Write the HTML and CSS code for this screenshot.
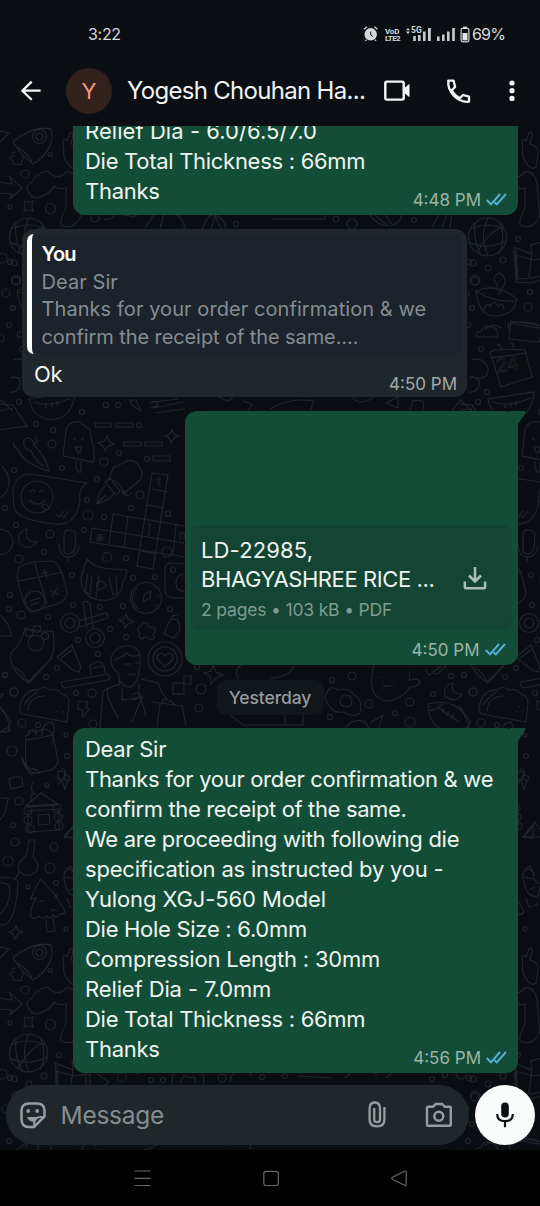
FILE: index.html
```html
<!DOCTYPE html>
<html lang="en">
<head>
<meta charset="utf-8">
<title>Chat</title>
<link rel="stylesheet" href="styles.css">
</head>
<body>
<div class="phone">
  <div class="status">
    <span class="clock">3:22</span>
    <div class="status-icons">
      <svg class="alarm" width="15" height="16" viewBox="364 27 15 16"><circle cx="371.7" cy="35.3" r="6.2" fill="#d5d7d8"/><path d="M365 30.2l3-2.4M378.4 30.2l-3-2.4M367.6 40.6l-1.3 1.3M375.8 40.6l1.3 1.3" stroke="#d5d7d8" stroke-width="1.3"/><path d="M371.7 32.5v3.300l2 1.600" stroke="#0b0f13" stroke-width="1" fill="none"/></svg>
      <div class="volte"><span>VoD</span><span>LTE2</span></div>
      <svg class="sig1" width="27" height="16" viewBox="406 26 27 16"><path d="M407 30.3l2-2.4 2 2.4zM407 31.6l2 2.4 2-2.4z" fill="#d5d7d8"/><text x="412" y="33.2" class="net">5G</text><path d="M414.2 36h2.6v5h-2.6zM419 35h2.6v6h-2.6zM424 31.5h2.6v9.500h-2.6zM429 28h2.800v13h-2.800z" fill="#c9cbcc"/></svg>
      <svg class="sig2" width="20" height="14" viewBox="437 28 20 14"><path d="M438 36.500h2.600v4.500h-2.600zM443 34.500h2.600v6.500h-2.600zM448 31.500h2.600v9.500h-2.600zM453.200 28h2.600v13h-2.600z" fill="#c9cbcc"/></svg>
      <svg class="batt" width="10" height="17" viewBox="460.500 26 10 17"><path d="M463.500 26.600h4v1.700h-4z" fill="#d5d7d8"/><rect x="461.600" y="28.400" width="7.800" height="13.400" rx="1.500" fill="none" stroke="#d5d7d8" stroke-width="1.200"/><path d="M463 33h5v7.400h-5z" fill="#e4e6e6"/></svg>
      <span class="pct">69%</span>
    </div>
  </div>

  <header class="bar">
    <svg class="back" width="24" height="24" viewBox="19 79 24 24"><path d="M40.600 90.700H22.300M31.700 81.600l-9.300 9.100 9.300 9.100" fill="none" stroke="#f4f6f7" stroke-width="2.300"/></svg>
    <div class="avatar">Y</div>
    <h1 class="name">Yogesh Chouhan Ha...</h1>
    <svg class="video" width="28" height="24" viewBox="383 79 28 24"><rect x="385.300" y="81.600" width="18.400" height="18" rx="1.600" fill="none" stroke="#f4f6f7" stroke-width="2.400"/><path d="M403.500 88.800l6-5v13.400l-6-5z" fill="#f4f6f7"/></svg>
    <svg class="call" width="26" height="26" viewBox="445 77.500 26 26"><path d="M448.300 80.200h5.300l1.500 6.300-3.500 3.300c2.200 3.700 4.600 6.100 8.100 8l3.300-3.300 6 1.600v5.100c-11.600 1.100-21.800-10.100-20.700-21z" fill="none" stroke="#f4f6f7" stroke-width="2.300" stroke-linejoin="round"/></svg>
    <svg class="more" width="8" height="24" viewBox="507.500 79 8 24"><g fill="#f4f6f7"><circle cx="511.500" cy="83" r="2.600"/><circle cx="511.500" cy="90.700" r="2.600"/><circle cx="511.500" cy="98.400" r="2.600"/></g></svg>
  </header>

  <main class="chat">
    <svg class="wallpaper" width="540" height="1024" viewBox="0 126 540 1024">
      <defs>
        <g id="doodles" class="doodles">
          <path d="M13 142C24 132 40 126 51 129C55 140 48 156 33 164Q22 156 13 142zM17 147Q28 153 32 162M16 152q-6 0-3 4q-5 2 0 5q-1 5 5 3q4 2 4-3q3-3-1-5"/>
          <circle cx="39.500" cy="136.500" r="7"/><circle cx="39.500" cy="136.500" r="3.500"/>
          <path d="M-2 182L12 184L10 177L22 188L10 199L12 194L-2 193M24 201q5 2 9 0q-2 5 0 10q-5-2-9 0q2-5 0-10M0 131l9 2-9 9"/>
          <path d="M31 183q-6 2-3 8q4 9 12 6q11-4 14-11q5 4 12 2v20q-6 10-5 17q8 4 14-1q8-6 5-16l-2-23q-2-14-12-13q-9 10-18-1q-12 2-17 12zM64 157l-1-16q2-4 4 0l3-8q4-2 3 3l-2 8q8 2 8 9l-2 14q-6 5-13-10"/>
          <circle cx="487.500" cy="237" r="19"/><path d="M470 229q18-8 34 0M469 242q17 9 37-1M475 223q-2 17 6 32M488 218q-9 18 0 38M500 223q6 16-1 31M477 252q15-24 27-25"/>
          <path d="M514 247l18 7-1-9 14-4v38l-14 4-15-1zM532 253l-3 24M516 249l2 31M497 290v-6q-7-8 3-11q9 7 2 15l-3 6M476 291q20-9 41 8q-3 16-21 17q-17 1-20-25q19 12 40 10M484 310q1-8 7-4q2-7 7 0q6-4 6 4"/>
          <path d="M477 337q-3-5 4-6q3-7 10-4q8 1 6 6q3 5-4 4zM511 321l32 5-4 16-30-3zM513 324l28 4M490 352q4-4 35-2l7 27-31 10zM490 358l37-5M497 345q3-3 4 5M510 344q3-3 4 4M472 360q6-3 12 2q7 7 2 14q-7 4-15 0M469 378q12-2 10 7q-2 8-10 7"/>
          <text x="496" y="371" transform="rotate(-8 508 365)" font-size="20">24</text>
          <path d="M29 399L75 392Q73 418 51 420Q33 418 29 399zM34 402q16 6 37-4M46 403v5M52 402v5M57 401v5"/>
          <path d="M-2 430L27 426L13 405L0 404M0 411q8-3 13-2"/>
          <path d="M18 450q6 14 31 21q-3-14-15-26q-3-11-10-5q-2 8 7 11q5 11 13 15M18 450q-6-5-4-8M33 445q7-4 2-8"/>
          <path d="M63 456l3-26q3-10 15-8q4 6 9 7l1 9q5 15 2 24zM76 461v8q2 4 5 3v-10M73 438l3 2M84 438l-3 2M75 447h6q0 7-3 6zM95 423h16v4H95zM116 423h17v4h-17zM124 442h17v4h-17zM145 442h17v4h-17zM153 456h17v5h-17zM107 436l2 5 5 3-6 2-3 5-2-5-5-3 6-2zM172 430l2 4 5 2-5 2-3 5-2-5-4-2 5-2z"/>
          <path d="M113 468l12-6q9-4 14 4q6 8 1 14l-17 14q-1-12-14-15zM110 478l10 13-4 4-11-13zM105 486q-7 6-8 18q13-4 17-11M97 503l9-8M123 490q3 10 9 2"/>
          <path d="M152 473l16 2-15 94-16-3zM152 489l16 3M147 505l16 3M113 514l72 12M92 528l92 15M92 528l-2 14 95 15M113 514l-4 31M128 516l-4 31M141 551l15 3M176 525l-3 29"/>
          <text x="157" y="486" font-size="13">t</text><text x="148" y="532" font-size="13">j</text><text x="96" y="541" font-size="13">a</text><text x="179" y="539" font-size="12">n</text>
          <path d="M13 491Q15 474 31 474L87 483Q78 488 80 501Q76 526 55 524Q15 520 14 506zM30 492q3-4 5 0M39 492q3-4 5 0M30 500q7 8 16 0M42 506q3-4 6 0t-3 4zM56 514l3 3 5-6M61 516l3 1 5-6"/><circle cx="37" cy="497" r="16"/>
          <path d="M27 529q-10 3-8 13q9 11 18 0q-13 1-10-13zM64 551V535q1-6 6-5q6 0 6 6l-1 12q-2 6-7 6q-4-1-4-3M59 544q1 14 10 13q8 0 10-11M68 557v5M0 529q13 2 13 14q-2 10-13 12M1 465q9 9 8 18q-1 10-8 14"/>
          <path d="M19 567q9-6 33-6q9 1 15 32q-1 8-10 11l-26 8q-7-2-14-35zM35 564l12 40M19 581l44-9M24 580l8-2M41 574l8-2M44 570l3 8M50 590l9 5M57 588l-5 9"/><circle cx="35" cy="601" r="10"/><path d="M30 601l10-3M31 605l9-3"/>
          <path d="M87 559l8 7q9 3 19 3l13 1q-1 8-4 12q-2 16-15 18q-21 2-26-14q-2-6 0-12zM88 573l-3 19 5 2 2-18M99 576l-3 22M109 577l4 18 4-2-1-16M97 583q5-4 8 0t-4 6q-5 3-4-6"/>
          <circle cx="146" cy="598" r="15.500"/><path d="M137 588q-10 12 2 21M143 602l1-7 7-4-1 7zM154 588l1-1M157 596h2M155 605l2 1"/>
          <path d="M185 564l-15-1q-5 1-5 6v22q1 6 8 7h12M185 574q-9 0-9 9t9 8"/><circle cx="173" cy="570" r="2.500"/>
          <circle cx="70" cy="623" r="9.500"/><circle cx="70" cy="623" r="5"/><circle cx="95" cy="638" r="9.500"/><circle cx="95" cy="638" r="5"/><path d="M79 621l27-8q3 3 1 5l-27 9M83 602q5-2 7 2l3 25M83 602l4 28M126 614l2 5 6 3-6 2-3 4-1-5-5-3 5-1zM140 627q3-6 8-3q0 5 6 3q3 5-1 7q3 7-4 5q-4-4-7 0q-5-2-2-6q-5-5 0-6zM168 624l3-5 7 1 2 10-6 8-10-4zM171 619l2-4 5 1"/>
          <path d="M25 628q12 4 28 3q3 16-2 28l-22 24Q8 669 11 653q11-10 14-25z"/><circle cx="36" cy="643" r="8"/><circle cx="29" cy="633" r="3.500"/><circle cx="37" cy="629" r="3.500"/><circle cx="45" cy="636" r="3.500"/>
          <path d="M57 657l15-12 9 22-2 5-6-2zM61 658l11-8M62 682l46-8q4 3 0 6l-44 8q-4-4-2-6zM91 675l-1-9q8-8 14-1l1 8M93 668l10-2M0 615q11 10 11 21H0"/>
          <path d="M119 686v-12q-10-8-8-17q6-13 20-11q11 3 9 19l-2 12q-4 11-10 10q-7-2-9-8M114 660q11-4 12-7q7 6 14 1M124 664h7M135 663h4M128 674q4 2 8 0M119 684l-16 7-3 37M141 679l17 4 4 10 5 6M122 688v12l17-2v-14M107 688l1 10 10 20M133 700l9-3-10 25M132 695q9-6 9 4l5 17M160 704l-3 23M152 702l30 4 4 20M162 704l1-5 8 2 5 5"/>
          <circle cx="165" cy="659" r="17"/><circle cx="165" cy="659" r="12"/><path d="M165 666q-12-8-6-12q5-1 6 2q6-6 8 0q1 5-8 10zM173 683h11v11h-11zM184 676h7v8h-7zM213 665l3 7 7 3-7 3-5 6-1-8-6-3 7-2z"/>
          <path d="M20 707q4-18 18-17q6-5 12 0q8-2 12 4q7 2 7 8l-2 20-44-8q-4-2-3-7zM28 711q1-15 17-15M24 705q8-11 14-13M60 707l1-1M62 712h2M57 711l1 1M78 701l10 1-2 6 3 1-6 8-1-7-4-1zM0 706l11 15-3 11H0M27 733q5-5 9 0q8-7 15-1q5 8 0 12"/>
          <path d="M374 665q-5 18 0 28q10 13 24 5q8-4 12-11q10 0 10-6l-4-2-7 1 1-9M375 665l-2-7M378 678l1-1M391 686l2-1M383 685q4 3 7 0M425 669l4 6 12-9M432 673l5 1 9-8M453 683q-11 3-8 13q11 8 17-2q-12 1-9-11zM325 698q4-15 13-8q10-3 16 5q9 4 6 18q-8 5-16-1q-12 3-19-14z"/><circle cx="346" cy="701" r="6"/>
          <path d="M428 704q18-4 29 3q11 7 12 24q-22 4-32-5q-9-6-9-22zM439 708l20 14M444 708l-2 5M449 711l-2 5M454 714l-2 5M428 711q10-2 15-7M459 732l10-6M474 668q8 2 13 14q9-8 16-16M370 723l13-8-5 16M345 728q9-11 20-6l5 8M230 715l13 10h60M285 710v14M303 713v12M241 665q-8 6-2 14M270 678q18 0 24-12"/>
          <path d="M26 740q15-2 27-5l5 26q-1 6-7 9l-21 4q-6-8-4-34zM27 741q-4-6 3-7v-4h6v5M42 736q-1-13 10-14q5 9 0 14M22 757q2 17 18 16q-4-5-10-4q-6-4-8-12zM9 779q7-4 13-1l1 8-12 3zM58 771l7 1-1 7 4 2-3 8-3-9-4-1zM33 782q-3 5 0 11M0 798h8q-1 14-8 22"/>
          <path d="M26 806l15-13 17 11zM31 802v-8h5M29 807l29-2M28 811l31-2v21l-31 2zM38 815l11-1 1 10-11 1zM65 837l9-11v12z"/><circle cx="28" cy="811" r="4"/><circle cx="28" cy="820" r="4"/><circle cx="30" cy="829" r="4"/><circle cx="57" cy="808" r="4"/><circle cx="58" cy="817" r="4"/><circle cx="59" cy="826" r="4"/>
          <path d="M29 840h6l-2 17q8 7 3 15q-9 7-17-1q-3-8 7-15zM19 872l-4 8M41 879q-8 12-10 20l5-1q-7 13-5 19q4 3 8-1 4 5 7 0 4 4 7-1 5 4 7-1 4 1 5-3-6-10-10-15l3 1q-12-11-17-18zM46 919l1 13 8-1-2-13M40 900q3 3 5 0M51 909q3 3 5 0M0 878q14-2 18 4q-1 24-7 37q-4 7-11 6M0 883q9-1 10 6q0 17-10 25M16 926l2 4 5 2-5 2-3 5-2-5-4-2 5-2z"/>
          <path d="M71 866q-10 6-6 17q4 16 14 13l3-12q-9-3-7-10zM67 868l8 4M65 877l9 2M70 890l6-3M67 898l3 9 9-3M535 822l-12 15h22zM517 785l8-11M520 770q5-4 4 5q8 1 2 8"/>
          <path d="M56 255l18 5 16-2v16l-17 4-15 1zM97 258l12 8-9 7"/><circle cx="188" cy="264" r="16"/><path d="M180 267q4-11 9-5q8-3 6 5M230 266q1-11 11-12q10 0 10 6M298 260l33 2M345 262l12-11q12-2 20 8M386 262l14-12M250 333l2-8M50 330l-1-6q11-4 30 0v6M25 330q10-8 17-2M95 330q12-10 20-2M142 335l20-8M230 330q0-12 16-14M250 330q4-6 20-5"/>
          <g><circle cx="50" cy="154.500" r="2"/><circle cx="25" cy="174" r="4"/><circle cx="10" cy="207" r="2"/><circle cx="50.500" cy="208.500" r="5"/><circle cx="10" cy="262" r="2.500"/><circle cx="16" cy="280" r="4.500"/><circle cx="6" cy="293" r="4"/><circle cx="13" cy="308" r="2.500"/><circle cx="9" cy="325" r="2.500"/><circle cx="2" cy="258" r="5"/><circle cx="0" cy="338" r="4"/><circle cx="518" cy="239" r="2.500"/><circle cx="473" cy="263" r="3"/><circle cx="488" cy="268" r="3"/><circle cx="503" cy="260" r="3"/><circle cx="475" cy="281" r="4"/><circle cx="472" cy="308" r="2.500"/><circle cx="530" cy="292" r="2.500"/><circle cx="528" cy="307" r="4"/><circle cx="481" cy="349" r="2.500"/><circle cx="487" cy="392" r="2.500"/><circle cx="478" cy="402" r="2.500"/><circle cx="82" cy="412" r="2.500"/><circle cx="106" cy="405" r="2.500"/><circle cx="118" cy="405" r="2.500"/><circle cx="36" cy="424" r="2.500"/><circle cx="53" cy="430" r="2.500"/><circle cx="52" cy="444" r="4"/><circle cx="62" cy="468" r="2.500"/><circle cx="104" cy="462" r="4"/><circle cx="119" cy="453" r="2.500"/><circle cx="139" cy="425" r="2.500"/><circle cx="147" cy="459" r="2.500"/><circle cx="14" cy="470" r="2.500"/><circle cx="97" cy="479" r="2.500"/><circle cx="88" cy="515" r="5"/><circle cx="87" cy="500" r="2.500"/><circle cx="104" cy="517" r="2.500"/><circle cx="140" cy="495" r="4"/><circle cx="131" cy="508" r="2.500"/><circle cx="168" cy="514" r="2.500"/><circle cx="50" cy="534" r="4"/><circle cx="84" cy="530" r="2.500"/><circle cx="16" cy="525" r="2.500"/><circle cx="5" cy="508" r="2.500"/><circle cx="44" cy="552" r="2.500"/><circle cx="19" cy="559" r="4"/><circle cx="107" cy="557" r="4.500"/><circle cx="126" cy="558" r="2.500"/><circle cx="167" cy="552" r="5"/><circle cx="155" cy="577" r="2.500"/><circle cx="133" cy="578" r="2.500"/><circle cx="72" cy="575" r="2.500"/><circle cx="10" cy="595" r="2.500"/><circle cx="9" cy="609" r="2.500"/><circle cx="21" cy="615" r="4"/><circle cx="48" cy="617" r="2.500"/><circle cx="73" cy="605" r="2.500"/><circle cx="100" cy="607" r="2.500"/><circle cx="123" cy="606" r="2.500"/><circle cx="170" cy="609" r="2.500"/><circle cx="110" cy="629" r="2.500"/><circle cx="78" cy="640" r="2.500"/><circle cx="126" cy="637" r="2.500"/><circle cx="98" cy="654" r="2.500"/><circle cx="57" cy="668" r="2.500"/><circle cx="46" cy="677" r="2.500"/><circle cx="5" cy="675" r="2.500"/><circle cx="14" cy="692" r="4"/><circle cx="76" cy="693" r="2.500"/><circle cx="92" cy="693" r="4"/><circle cx="197" cy="667" r="2.500"/><circle cx="201" cy="689" r="5"/><circle cx="199" cy="708" r="4"/><circle cx="22" cy="723" r="4"/><circle cx="38" cy="725" r="2.500"/><circle cx="93" cy="724" r="4"/><circle cx="332" cy="680" r="2.500"/><circle cx="352" cy="676" r="4"/><circle cx="369" cy="704" r="4"/><circle cx="410" cy="702" r="4"/><circle cx="395" cy="713" r="2.500"/><circle cx="410" cy="722" r="5"/><circle cx="330" cy="717" r="2.500"/><circle cx="433" cy="694" r="2.500"/><circle cx="473" cy="692" r="4"/><circle cx="451" cy="676" r="2.500"/><circle cx="464" cy="675" r="2.500"/><circle cx="12" cy="751" r="5"/><circle cx="66" cy="735" r="2"/><circle cx="67" cy="756" r="2.500"/><circle cx="47" cy="785" r="2"/><circle cx="19" cy="801" r="4"/><circle cx="13" cy="825" r="2.500"/><circle cx="15" cy="842" r="4"/><circle cx="54" cy="847" r="4"/><circle cx="8" cy="861" r="5"/><circle cx="50" cy="868" r="5"/><circle cx="28" cy="887" r="2"/><circle cx="56" cy="883" r="2.500"/><circle cx="66" cy="929" r="2"/><circle cx="122" cy="261" r="4.500"/><circle cx="138" cy="255" r="2.500"/><circle cx="151" cy="264" r="2.500"/><circle cx="163" cy="264" r="2.500"/><circle cx="222" cy="262" r="4"/><circle cx="262" cy="261" r="2.500"/><circle cx="285" cy="260" r="2.500"/><circle cx="432" cy="263" r="2.500"/><circle cx="445" cy="259" r="2.500"/><circle cx="336" cy="219" r="3"/><circle cx="352" cy="224" r="5"/><circle cx="414" cy="220" r="2.500"/><circle cx="236" cy="224" r="2.500"/><circle cx="95" cy="218" r="4"/></g>
          <path d="M104 219q7 2 10-4M120 214l14 3 4-3M145 228l9-14M160 228l4-14M176 214q10 8 8 15M202 230q7-20 15-14q8 3 9 14M211 229l4-13 6 13M273 219h52v-5M370 215q7 11 20 11 9-2 12-11M375 215l12 10M385 214l6 10M432 228l7-14M442 228l5-14M450 228l2-14M270 409q20-12 44-8l-4 10M352 397q8 10 22 0M386 403l12-6v11zM410 411l3-11 10 1 1 9M452 411l8-11 12 11M130 400h6l5 11-9-6zM152 402l26-3M153 408l30-6M155 413l30-4M150 403q4-4 7 0t-6 4M218 397l10 4 5-4M243 401l9 3-4 8"/>
        </g>
      </defs>
      <g class="ink">
        <use href="#doodles"/><use href="#doodles" x="459"/><use href="#doodles" x="-459"/>
        <use href="#doodles" y="816"/><use href="#doodles" x="459" y="816"/><use href="#doodles" x="-459" y="816"/>
      </g>
    </svg>

    <div class="thread">
      <section class="bubble out clipped">
        <div class="copy">
          <p class="w-c">Relief Dia - 6.0/6.5/7.0</p>
          <p>Die Total Thickness : 66mm</p>
          <p>Thanks</p>
        </div>
        <div class="stamp"><time>4:48 PM</time><svg class="ticks" width="21" height="14" viewBox="0 0 21 14"><path d="M.8 7l4.200 4.300L14 1M8.600 9.200l2.200 2.100L20 1"/></svg></div>
      </section>

      <section class="bubble in">
        <svg class="tail" width="16" height="16" viewBox="0 0 16 16"><path d="M16 0H1.500Q-.300.400.500 1.800L8 13v3h8z"/></svg>
        <div class="quote">
          <b>You</b>
          <p>Dear Sir</p>
          <p>Thanks for your order confirmation &amp; we</p>
          <p class="w-q">confirm the receipt of the same....</p>
        </div>
        <p class="reply">Ok</p>
        <div class="stamp"><time>4:50 PM</time></div>
      </section>

      <section class="bubble out doc">
        <svg class="tail" width="16" height="16" viewBox="0 0 16 16"><path d="M0 0h14.500q1.800.400 1 1.800L8 13v3H0z"/></svg>
        <div class="file">
          <div class="file-info">
            <p class="w-ld">LD-22985,</p>
            <p class="w-bh">BHAGYASHREE RICE ...</p>
            <small>2 pages • 103 kB • PDF</small>
          </div>
          <svg class="download" width="24" height="24" viewBox="463.500 566 24 24"><path d="M475.500 567v13.500M469.500 575.500l6 6 6-6M465.300 581.500v5.700q0 1 1 1h18.300q1 0 1-1v-5.700" fill="none" stroke="#a9c0b5" stroke-width="2.500"/></svg>
        </div>
        <div class="stamp"><time>4:50 PM</time><svg class="ticks" width="21" height="14" viewBox="0 0 21 14"><path d="M.8 7l4.200 4.300L14 1M8.600 9.200l2.200 2.100L20 1"/></svg></div>
      </section>

      <div class="day">Yesterday</div>

      <section class="bubble out long">
        <svg class="tail" width="16" height="16" viewBox="0 0 16 16"><path d="M0 0h14.500q1.800.400 1 1.800L8 13v3H0z"/></svg>
        <div class="copy">
          <p>Dear Sir</p>
          <p class="w-a">Thanks for your order confirmation &amp; we</p>
          <p class="w-b">confirm the receipt of the same.</p>
          <p>We are proceeding with following die</p>
          <p class="w-d">specification as instructed by you -</p>
          <p class="w-e">Yulong XGJ-560 Model</p>
          <p>Die Hole Size : 6.0mm</p>
          <p class="w-d">Compression Length : 30mm</p>
          <p class="w-e">Relief Dia - 7.0mm</p>
          <p>Die Total Thickness : 66mm</p>
          <p>Thanks</p>
        </div>
        <div class="stamp"><time>4:56 PM</time><svg class="ticks" width="21" height="14" viewBox="0 0 21 14"><path d="M.8 7l4.200 4.300L14 1M8.600 9.200l2.200 2.100L20 1"/></svg></div>
      </section>
    </div>

    <footer class="composer">
      <div class="field">
        <svg class="sticker" width="28" height="28" viewBox="19.500 1100.500 28 28"><path d="M29.500 1103h8q7.500 0 7.500 7.500v5.500l-10.500 10.500h-5q-7.500 0-7.500-7.500v-8.500q0-7.500 7.500-7.500z" fill="none" stroke="#969c9f" stroke-width="2.500"/><path d="M34.700 1126v-3q0-6.500 6.500-6.500h3.500" fill="none" stroke="#969c9f" stroke-width="2.200"/><circle cx="28.700" cy="1110.500" r="1.900" fill="#969c9f"/><circle cx="37.700" cy="1110.500" r="1.900" fill="#969c9f"/><path d="M27.500 1116.400h11.700l-4.500 5q-5.500-.200-7.200-5z" fill="#969c9f"/></svg>
        <span class="hint">Message</span>
        <svg class="clip" width="18" height="27" viewBox="368.500 1101 18 27"><path d="M384.900 1107v13q0 6.300-7.400 6.300t-7.400-6.300v-11.500q0-6 5.200-6t5.200 6v11q0 2.700-2.900 2.700t-2.900-2.700V1108" fill="none" stroke="#969c9f" stroke-width="2.300"/></svg>
        <svg class="camera" width="28" height="26" viewBox="425.500 1101.500 28 26"><path d="M428.500 1106.300h5l2.600-2.800h6.600l2.600 2.800h5q1 0 1 1v17q0 1-1 1h-21.800q-1 0-1-1v-17q0-1 1-1z" fill="none" stroke="#969c9f" stroke-width="2.400"/><circle cx="439.300" cy="1115.700" r="4.500" fill="none" stroke="#969c9f" stroke-width="2.500"/></svg>
      </div>
      <div class="mic"><svg width="20" height="26" viewBox="495 1101.500 20 26"><rect x="501.200" y="1102" width="7.600" height="15" rx="3.800" fill="#0b0f13"/><path d="M497.200 1113.500q0 7.200 7.800 7.200t7.800-7.200M505 1120.700v6" fill="none" stroke="#0b0f13" stroke-width="2.200"/></svg></div>
    </footer>
  </main>

  <nav class="system">
    <svg width="18" height="18" viewBox="134 1170 18 18"><path d="M134.500 1171h16M134.500 1178.300h16M134.500 1185.500h16"/></svg>
    <svg width="18" height="18" viewBox="262 1170 18 18"><rect x="263.800" y="1171.300" width="14.500" height="14.200" rx="2.500"/></svg>
    <svg width="18" height="18" viewBox="390 1170 18 18"><path d="M392.500 1177.300l12-6q1.700-.600 1.700 1v12q0 1.600-1.700 1l-12-6q-1.400-1 0-2z"/></svg>
  </nav>
</div>
</body>
</html>
```
FILE: styles.css
```css
* { box-sizing: border-box; }
body { margin: 0; background: #0b0f13; font-family: "Inter", "Liberation Sans", sans-serif; }
p, h1 { margin: 0; font-weight: 400; }
svg { display: block; flex: none; }

.phone { width: 540px; height: 1206px; overflow: hidden; display: flex; flex-direction: column; background: #0b0f13; }

.status { height: 56px; flex: none; display: flex; justify-content: space-between; align-items: flex-start; padding: 24px 34px 0 88px; color: #d5d7d8; }
.clock { font-size: 16px; line-height: 20px; letter-spacing: -.3px; }
.status-icons { display: flex; height: 20px; align-items: center; }
.volte { display: flex; flex-direction: column; width: 17px; margin: 2px 3px 0 6px; font: 700 8px/7px "Roboto", sans-serif; }
.volte span { white-space: nowrap; letter-spacing: -.2px; }
.volte span:last-child { letter-spacing: -.6px; }
.net { font: 700 8.500px "Roboto", sans-serif; fill: #d5d7d8; }
.alarm { margin-right: 1px; }
.sig2 { margin: 1px 4px 0; }
.pct { width: 34px; margin-left: 2px; font-size: 16px; line-height: 20px; letter-spacing: -.8px; }

.bar { height: 70px; flex: none; display: flex; align-items: center; padding: 0 24.500px 0 19px; }
.avatar { width: 46px; height: 46px; margin-left: 23px; border-radius: 50%; background: #33211e; color: #f29a77; font-size: 22px; line-height: 47px; text-align: center; flex: none; }
.name { width: 256px; margin-left: 15px; color: #f2f4f5; font-size: 24px; line-height: 30px; letter-spacing: -.7px; white-space: nowrap; }
.call { margin-left: 34px; }
.more { margin-left: auto; }

.chat { position: relative; flex: 1; min-height: 0; display: flex; flex-direction: column; overflow: hidden; background: #0a0e12; }
.wallpaper { position: absolute; left: 0; top: 0; }
.ink { fill: none; stroke: #20262a; stroke-width: 1.150; }
.doodles text { font-family: "Liberation Sans", sans-serif; fill: none; stroke-width: .6; }

.thread { position: relative; height: 947px; flex: none; display: flex; flex-direction: column; }
.bubble { position: relative; border-radius: 12px; font-size: 22px; line-height: 30px; color: #eef5f1; letter-spacing: -.29px; }
.bubble p { white-space: nowrap; }
.out { align-self: flex-end; margin-right: 22px; width: 445px; background: #144d37; }
.copy { padding: 6px 12px 9px; }
.stamp { position: absolute; right: 11px; bottom: 5px; display: flex; align-items: center; gap: 5px; font-size: 17px; line-height: 20px; letter-spacing: 0; color: #9ab5a8; }
.ticks path { fill: none; stroke: #53b3dc; stroke-width: 1.900; }
.tail { position: absolute; right: -8px; top: 0; fill: #144d37; }

.clipped { height: 89px; display: flex; flex-direction: column; justify-content: flex-end; overflow: hidden; border-radius: 0 0 12px 12px; }
.clipped .copy { flex: none; }

.in { width: 445px; height: 168px; margin: 14px 0 14px 22px; padding: 5px; background: #20272a; }
.in .tail { right: auto; left: -8px; fill: #171d20; z-index: -1; }
.quote { height: 120px; padding: 7px 10px 0 9.500px; border-left: 5px solid #fff; border-radius: 7px; background: #1c232a; color: #868d92; font-size: 20px; line-height: 27.700px; letter-spacing: .07px; }
.quote b { display: block; color: #fff; font-weight: 600; letter-spacing: -.8px; }
.quote .w-q { letter-spacing: -.09px; }
.reply { padding-left: 7px; line-height: 30px; margin-top: 5px; }
.in .stamp { color: #a4a9ab; bottom: 3px; right: 10px; }

.doc { width: 333px; height: 254px; padding: 114px 6px 0; }
.doc .stamp { right: 12.500px; bottom: 5px; }
.file { height: 106px; display: flex; padding: 11px 25px 0 10px; border-radius: 8px; background: #144433; }
.file-info { flex: 1; line-height: 29px; }
.file small { display: block; color: #7e9d90; font-size: 17.500px; line-height: 30px; letter-spacing: -.17px; margin-top: 1px; }
.download { margin-top: 30px; }

.day { align-self: center; width: 107px; height: 35px; margin: 15px 0 13px; border-radius: 9px; background: #11161a; color: #969b9e; font-size: 17.500px; font-weight: 500; line-height: 35px; text-align: center; letter-spacing: -.1px; }
.long { height: 345px; }

.w-a, .long .w-b { letter-spacing: -.31px; }
.long .w-b { letter-spacing: -.36px; }
.w-c { letter-spacing: .06px; }
.w-d { letter-spacing: -.21px; }
.w-e { letter-spacing: -.12px; }
.w-ld { letter-spacing: .15px; }
.w-bh { letter-spacing: -.4px; }

.composer { position: relative; display: flex; gap: 5.500px; padding: 11.500px 5px 0 6px; }
.field { width: 463px; height: 60px; display: flex; align-items: center; padding: 0 16.500px 0 12.500px; border-radius: 30px; background: #20272a; }
.hint { flex: 1; margin-left: 14px; font-size: 24.500px; line-height: 30px; letter-spacing: -.25px; color: #868d90; }
.camera { margin-left: 39px; }
.mic { width: 60px; height: 60px; border-radius: 50%; background: #fafbfb; display: flex; align-items: center; justify-content: center; }

.system { height: 56px; flex: none; display: flex; gap: 110px; padding: 20px 0 0 134px; background: #000; }
.system svg { fill: none; stroke: #686868; stroke-width: 1.200; }
```
